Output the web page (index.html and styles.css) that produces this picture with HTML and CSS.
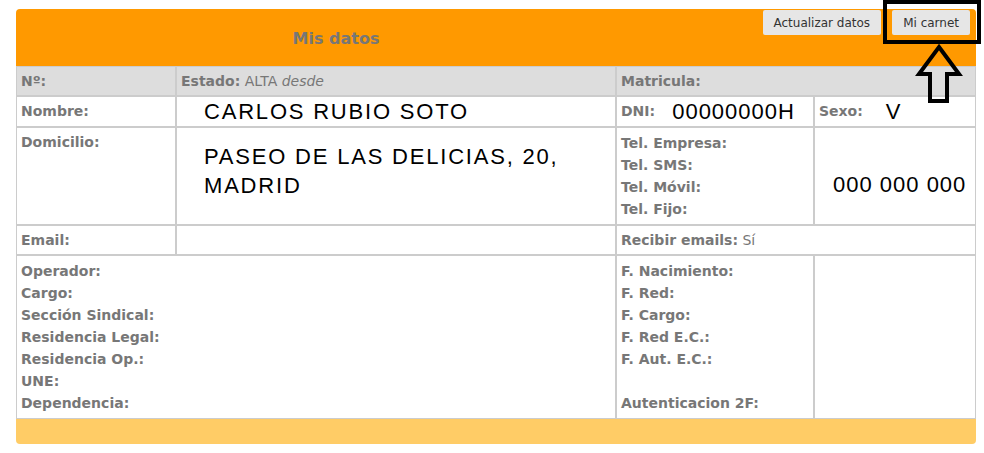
FILE: index.html
```html
<!DOCTYPE html>
<html lang="es">
<head>
<meta charset="UTF-8">
<title>Mis datos</title>
<link rel="stylesheet" href="styles.css">
</head>
<body>

<div class="panel">
  <div class="panel-head">
    <h2 class="panel-title">Mis datos</h2>
    <div class="actions">
      <button class="btn">Actualizar datos</button>
      <button class="btn">Mi carnet</button>
    </div>
  </div>

  <div class="datos">
    <!-- fila 1 -->
    <div class="cell shade"><b>Nº:</b></div>
    <div class="cell shade"><b>Estado:</b> ALTA <i>desde</i></div>
    <div class="cell shade span2"><b>Matricula:</b></div>

    <!-- fila 2 -->
    <div class="cell"><b>Nombre:</b></div>
    <div class="cell"><span class="big name">CARLOS RUBIO SOTO</span></div>
    <div class="cell"><b>DNI:</b><span class="big num dni">00000000H</span></div>
    <div class="cell"><b>Sexo:</b><span class="big num sexo">V</span></div>

    <!-- fila 3 -->
    <div class="cell"><b>Domicilio:</b></div>
    <div class="cell"><div class="big address">PASEO DE LAS DELICIAS, 20, MADRID</div></div>
    <div class="cell list">
      <b>Tel. Empresa:</b>
      <b>Tel. SMS:</b>
      <b>Tel. Móvil:</b>
      <b>Tel. Fijo:</b>
    </div>
    <div class="cell"><div class="big num phone">000 000 000</div></div>

    <!-- fila 4 -->
    <div class="cell"><b>Email:</b></div>
    <div class="cell"></div>
    <div class="cell span2"><b>Recibir emails:</b> Sí</div>

    <!-- fila 5 -->
    <div class="cell span2 list">
      <b>Operador:</b>
      <b>Cargo:</b>
      <b>Sección Sindical:</b>
      <b>Residencia Legal:</b>
      <b>Residencia Op.:</b>
      <b>UNE:</b>
      <b>Dependencia:</b>
    </div>
    <div class="cell list">
      <b>F. Nacimiento:</b>
      <b>F. Red:</b>
      <b>F. Cargo:</b>
      <b>F. Red E.C.:</b>
      <b>F. Aut. E.C.:</b>
      <b>&nbsp;</b>
      <b>Autenticacion 2F:</b>
    </div>
    <div class="cell"></div>
  </div>

  <div class="panel-foot"></div>
</div>

<!-- marca sobre el botón "Mi carnet" -->
<svg class="callout" width="984" height="110" viewBox="0 0 984 110">
  <rect x="885" y="2" width="94" height="40" fill="none" stroke="#000" stroke-width="4"/>
  <polygon points="939,47 959,74 947,74 947,101 930,101 930,74 919,74" fill="none" stroke="#000" stroke-width="4"/>
</svg>

</body>
</html>
```

FILE: styles.css
```css
body {
  margin: 0;
  font-family: "DejaVu Sans", Verdana, sans-serif;
  font-size: 14px;
  color: #777;
  background: #fff;
}
.panel {
  width: 960px;
  margin: 9px 0 0 16px;
}
.panel-head {
  display: flex;
  justify-content: space-between;
  height: 57px;
  background: #f90;
  border-radius: 4px 4px 0 0;
}
.panel-title {
  width: 640px;
  margin: 0;
  align-self: center;
  text-align: center;
  font-size: 16px;
  color: #777;
  padding-top: 1px;
}
.actions {
  display: flex;
  gap: 11px;
  margin: 1px 6px 0 0;
}
.btn {
  height: 25px;
  padding: 0 11px;
  border: none;
  border-radius: 2px;
  background: #e6e6e6;
  color: #333;
  font-family: "DejaVu Sans", Verdana, sans-serif;
  font-size: 12px;
  cursor: pointer;
}

.datos {
  display: grid;
  grid-template-columns: 160px 440px 198px 162px;
}
.cell {
  box-sizing: border-box;
  border: 1px solid #ccc;
  padding: 4px;
  line-height: 20px;
  background: #fff;
}
.cell.shade {
  background: #ddd;
}
.span2 {
  grid-column: span 2;
}
.list b {
  display: block;
  line-height: 22px;
}

/* valores grandes */
.big {
  font-family: "Liberation Sans", Arial, sans-serif;
  font-size: 22px;
  line-height: 21px;
  color: #000;
  letter-spacing: 1.8px;
  vertical-align: top;
}
.big.num {
  letter-spacing: 1px;
}
.name {
  margin-left: 23px;
}
.dni {
  margin-left: 17px;
}
.sexo {
  margin-left: 23px;
}
.address {
  margin: 10px 0 0 23px;
  line-height: 29px;
}
.phone {
  margin: 42px 0 0 14px;
}

.panel-foot {
  height: 25px;
  background: #fc6;
  border-radius: 0 0 4px 4px;
}

.callout {
  position: absolute;
  top: 0;
  left: 0;
  pointer-events: none;
}
```
